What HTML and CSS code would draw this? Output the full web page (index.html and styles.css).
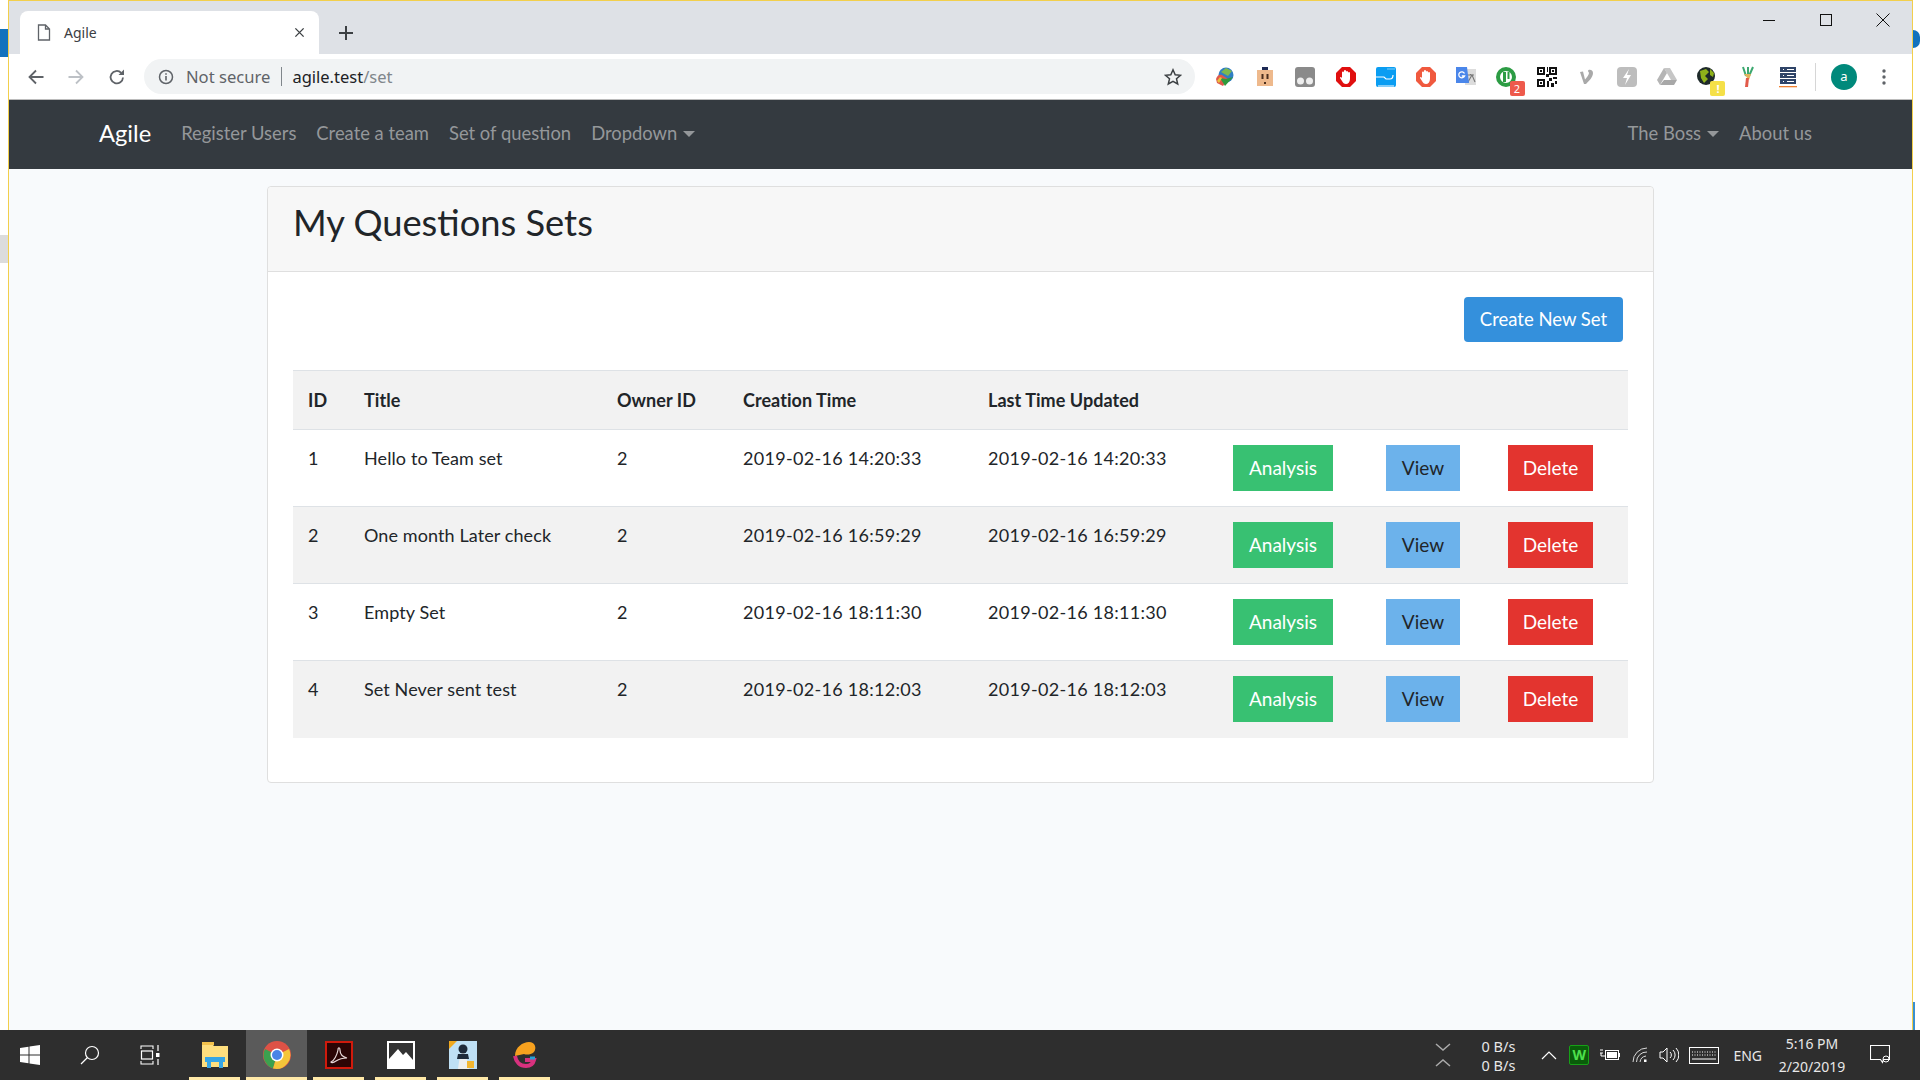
FILE: index.html
```html
<!DOCTYPE html>
<html lang="en">
<head>
<meta charset="utf-8">
<title>Agile</title>
<link rel="stylesheet" href="styles.css">
</head>
<body>
<div class="desktop">
  <div class="edge-left">
    <div class="edge-a"></div><div class="edge-blue"></div><div class="edge-b"></div><div class="edge-gray"></div><div class="edge-c"></div>
  </div>
  <div class="window">
    <div class="tabstrip">
      <div class="tab">
        <svg class="tab-file" viewBox="0 0 14 17"><path d="M1.5 1h7l4 4v11h-11zM8.500 1v4h4" fill="none" stroke="#5f6368" stroke-width="1.3"/></svg>
        <span class="tab-title">Agile</span>
        <svg class="tab-x" viewBox="0 0 12 12"><path d="M1.500 1.500l9 9M10.500 1.500l-9 9" stroke="#3c4043" stroke-width="1.500"/></svg>
      </div>
      <svg class="newtab" viewBox="0 0 16 16"><path d="M8 1v14M1 8h14" stroke="#3c4043" stroke-width="2"/></svg>
      <div class="winctl">
        <svg viewBox="0 0 14 14"><path d="M1 7.500h12" stroke="#111" stroke-width="1"/></svg>
        <svg viewBox="0 0 14 14"><rect x="1.500" y="1.500" width="11" height="11" fill="none" stroke="#111" stroke-width="1"/></svg>
        <svg viewBox="0 0 14 14"><path d="M.5.500l13 13M13.500.500l-13 13" stroke="#111" stroke-width="1"/></svg>
      </div>
    </div>
    <div class="toolbar">
      <div class="navbtns">
        <svg viewBox="0 0 18 18"><path d="M16.500 9H2.500M9 2.500L2.500 9 9 15.500" fill="none" stroke="#5f6368" stroke-width="1.800"/></svg>
        <svg viewBox="0 0 18 18"><path d="M1.500 9h14M9 2.500L15.500 9 9 15.500" fill="none" stroke="#bdc1c6" stroke-width="1.800"/></svg>
        <svg viewBox="0 0 18 18"><path d="M15 9.500A6.200 6.200 0 1 1 13.200 4.800" fill="none" stroke="#5f6368" stroke-width="1.800"/><path d="M16 1.500v5.500h-5.500z" fill="#5f6368"/></svg>
      </div>
      <div class="omnibox">
        <svg class="info" viewBox="0 0 16 16"><circle cx="8" cy="8" r="6.500" fill="none" stroke="#5f6368" stroke-width="1.500"/><path d="M8 7v4.500M8 4.200v1.600" stroke="#5f6368" stroke-width="1.600"/></svg>
        <span class="secure">Not secure</span>
        <span class="omni-sep"></span>
        <span class="url">agile.test<span class="url-path">/set</span></span>
        <svg class="star" viewBox="0 0 18 18"><path d="M9 1.800l2.200 4.900 5.300.6-4 3.500 1.200 5.200L9 13.300 4.300 16l1.200-5.200-4-3.500 5.300-.6z" fill="none" stroke="#3c4043" stroke-width="1.500"/></svg>
      </div>
      <div class="exts">
        <span class="ext"><svg viewBox="0 0 22 22"><circle cx="12" cy="9" r="7.500" fill="#2f7fc4"/><path d="M7 6l5-4 6 3-4 5z" fill="#7db84e"/><path d="M2 13c1-4 4-5 6-4l6 4-5 7-6-3z" fill="#e0574a"/><path d="M6 12l6 1 7-2-8 9z" fill="#2f9a3c"/><path d="M3 15l3-4 2 1-3 5z" fill="#e7c23c"/></svg></span>
        <span class="ext"><svg viewBox="0 0 22 22"><rect x="3" y="4" width="16" height="16" fill="#eeb98c"/><path d="M8 1h6v3H8z" fill="#1d2a55"/><path d="M7.500 8h2v5h-2zM12.500 8h2v5h-2zM10 16h2v2h-2z" fill="#4a2f1e"/></svg></span>
        <span class="ext"><svg viewBox="0 0 22 22"><rect x="1" y="1" width="20" height="20" rx="3" fill="#8a8a8a"/><circle cx="6.500" cy="15" r="3.500" fill="#eee"/><circle cx="15.500" cy="15" r="3.500" fill="#eee"/></svg></span>
        <span class="ext"><svg viewBox="0 0 22 22"><path d="M7 1h8l6 6v8l-6 6H7l-6-6V7z" fill="#e00f0f"/><path d="M7 11V6.500a1 1 0 0 1 2 0V5a1 1 0 0 1 2 0v1a1 1 0 0 1 2 0v1a1 1 0 0 1 2 0v6c0 3-2 5-4 5s-3-1-4-3l-2-3c0-1 1-1.500 2 0z" fill="#fff"/></svg></span>
        <span class="ext"><svg viewBox="0 0 22 22"><rect x="1" y="1" width="20" height="20" rx="2" fill="#0a9df2"/><path d="M1 11h8l2 2h4c2 0 3-1 3-4M3 20h16" fill="none" stroke="#fff" stroke-width="1.200"/><path d="M12 3h8" stroke="#7fd0fa"/></svg></span>
        <span class="ext"><svg viewBox="0 0 22 22"><path d="M7 1h8l6 6v8l-6 6H7l-6-6V7z" fill="#f0593e"/><path d="M7 11V6.500a1 1 0 0 1 2 0V5a1 1 0 0 1 2 0v1a1 1 0 0 1 2 0v1a1 1 0 0 1 2 0v6c0 3-2 5-4 5s-3-1-4-3l-2-3c0-1 1-1.500 2 0z" fill="#fff"/></svg></span>
        <span class="ext"><svg viewBox="0 0 22 22"><path d="M10 3h11v16H10z" fill="#dcdcdc"/><path d="M12 9h7M15.500 8v1M13 16l4-7 3 7" fill="none" stroke="#777" stroke-width="1.100"/><path d="M1 1h11l2 16H7l3 4-3-4H1z" fill="#4a86ea"/><path d="M9.500 7.500A3 3 0 1 0 9.600 10H6.800" fill="none" stroke="#fff" stroke-width="1.300"/></svg></span>
        <span class="ext"><svg viewBox="0 0 22 22"><circle cx="11" cy="11" r="8" fill="none" stroke="#2c9c44" stroke-width="4"/><path d="M8 6h3v10H8zM12.500 6h2v7h-2z" fill="#2c9c44"/></svg><span class="badge badge-red">2</span></span>
        <span class="ext"><svg viewBox="0 0 22 22"><rect x="1" y="1" width="20" height="20" fill="#fff"/><path d="M1 1h8v8H1zM3 3v4h4V3zM13 1h8v8h-8zM15 3v4h4V3zM1 13h8v8H1zM3 15v4h4v-4zM4 4h2v2H4zM16 4h2v2h-2zM4 16h2v2H4zM11 1h1v5h-1zM10 8h3v3h-3zM13 12h3v3h-3zM17 11h4v2h-4zM11 15h2v6h-2zM15 17h3v4h-3zM19 15h2v3h-2z" fill="#111"/></svg></span>
        <span class="ext"><svg viewBox="0 0 22 22"><path d="M4 6l3-.5 2 8c2-2 4-5 4-6.500 0-1-1-1-1-2 0-2 5-2 5 2 0 4-4 8-7 11H8z" fill="#a9a9a9"/></svg></span>
        <span class="ext"><svg viewBox="0 0 22 22"><rect x="1" y="1" width="20" height="20" rx="4" fill="#bdbdbd"/><path d="M13 3l-6 9h4l-2 7 6-10h-4z" fill="#fff"/></svg></span>
        <span class="ext"><svg viewBox="0 0 22 22"><path d="M8 2h6l7 12h-6z" fill="#c6c6c6"/><path d="M8 2l-7 12 3 5 7-12z" fill="#b5b5b5"/><path d="M8 14h13l-3 5H4z" fill="#a8a8a8"/></svg></span>
        <span class="ext"><svg viewBox="0 0 22 22"><circle cx="10" cy="10" r="9" fill="#1e2a2a"/><path d="M4 5l6-2 3 3-4 4 3 3-4 4-3-5zM14 3l4 4-1 4-3-2z" fill="#8fb21a"/></svg><span class="badge badge-yellow">!</span></span>
        <span class="ext"><svg viewBox="0 0 22 22"><path d="M6 1l3 9M16 1l-4 9M11 1v8" fill="none" stroke="#3ca870" stroke-width="2"/><path d="M7 8l7 0-2 6z" fill="#e2b35c"/><path d="M9 12h3l-1 9H8z" fill="#e25a4a"/></svg></span>
        <span class="ext"><svg viewBox="0 0 22 22"><path d="M3 1h16v5H3zM3 7h16v5H3zM3 13h16v5H3z" fill="#2f4468"/><path d="M6 3h1v1H6zM10 3h7v1h-7zM6 9h1v1H6zM10 9h7v1h-7zM6 15h1v1H6zM10 15h7v1h-7z" fill="#fff"/><path d="M2 20h18v1.300H2z" fill="#f08030"/></svg></span>
      </div>
      <span class="tool-sep"></span>
      <span class="avatar">a</span>
      <svg class="kebab" viewBox="0 0 4 16"><circle cx="2" cy="2" r="1.700" fill="#5f6368"/><circle cx="2" cy="8" r="1.700" fill="#5f6368"/><circle cx="2" cy="14" r="1.700" fill="#5f6368"/></svg>
    </div>
    <nav class="navbar">
      <div class="nav-left">
        <a class="brand">Agile</a>
        <a class="nav-link">Register Users</a>
        <a class="nav-link">Create a team</a>
        <a class="nav-link">Set of question</a>
        <a class="nav-link caret">Dropdown</a>
      </div>
      <div class="nav-right">
        <a class="nav-link caret">The Boss</a>
        <a class="nav-link">About us</a>
      </div>
    </nav>
    <main class="page">
      <section class="card">
        <header class="card-header"><h1 class="card-title">My Questions Sets</h1></header>
        <div class="card-body">
          <div class="actions"><a class="create-btn">Create New Set</a></div>
          <table class="sets">
            <thead>
              <tr>
                <th class="c-id">ID</th><th class="c-title">Title</th><th class="c-owner">Owner ID</th><th class="c-time">Creation Time</th><th class="c-time">Last Time Updated</th><th class="c-a"></th><th class="c-v"></th><th class="c-d"></th>
              </tr>
            </thead>
            <tbody>
              <tr><td>1</td><td>Hello to Team set</td><td>2</td><td class="date">2019-02-16 14:20:33</td><td class="date">2019-02-16 14:20:33</td><td><a class="btn green">Analysis</a></td><td><a class="btn blue">View</a></td><td><a class="btn red">Delete</a></td></tr>
              <tr><td>2</td><td>One month Later check</td><td>2</td><td class="date">2019-02-16 16:59:29</td><td class="date">2019-02-16 16:59:29</td><td><a class="btn green">Analysis</a></td><td><a class="btn blue">View</a></td><td><a class="btn red">Delete</a></td></tr>
              <tr><td>3</td><td>Empty Set</td><td>2</td><td class="date">2019-02-16 18:11:30</td><td class="date">2019-02-16 18:11:30</td><td><a class="btn green">Analysis</a></td><td><a class="btn blue">View</a></td><td><a class="btn red">Delete</a></td></tr>
              <tr><td>4</td><td>Set Never sent test</td><td>2</td><td class="date">2019-02-16 18:12:03</td><td class="date">2019-02-16 18:12:03</td><td><a class="btn green">Analysis</a></td><td><a class="btn blue">View</a></td><td><a class="btn red">Delete</a></td></tr>
            </tbody>
          </table>
        </div>
      </section>
    </main>
  </div>
  <div class="edge-right">
    <div class="edge-dot"></div>
    <div class="edge-sliver"></div>
  </div>
</div>
<footer class="taskbar">
  <div class="task-left">
    <span class="sys"><svg class="i-win" viewBox="0 0 20 20"><path d="M0 3l8.500-1.200v7.700H0zM9.500 1.600L20 0v9.500H9.500zM0 10.500h8.500v7.700L0 17zM9.500 10.500H20V20L9.500 18.400z" fill="#fff"/></svg></span>
    <span class="sys"><svg class="i-sys" viewBox="0 0 20 20"><circle cx="12" cy="8" r="6.500" fill="none" stroke="#fff" stroke-width="1.200"/><path d="M7.500 12.500L1 19" stroke="#fff" stroke-width="1.300"/></svg></span>
    <span class="sys"><svg class="i-sys" viewBox="0 0 20 20"><path d="M1 4V1h12v3M1 16v3h12v-3" fill="none" stroke="#fff" stroke-width="1.100"/><rect x="1.500" y="6" width="11" height="8" fill="none" stroke="#fff" stroke-width="1.200"/><path d="M18 0v6M18 14v6" stroke="#fff" stroke-width="1.200"/><rect x="16" y="8" width="3.500" height="4" fill="#fff"/></svg></span>
    <span class="app app-files"><svg class="i-app" viewBox="0 0 28 28"><path d="M1 3h10l2 2h14v21H1z" fill="#ffdf7e"/><rect x="1" y="1" width="12" height="3" fill="#f3c24c"/><path d="M6 27v-6h-2v-5h20v5h-2v6h-4v-6h-8v6z" fill="#37a6e6"/></svg></span>
    <span class="app active"><svg class="i-app" viewBox="0 0 28 28"><circle cx="14" cy="14" r="14" fill="#de5246"/><path d="M14 14L2 8A14 14 0 0 0 10 27.500z" fill="#3ca14f"/><path d="M14 14l12-6a14 14 0 0 1-16 19.500z" fill="#f5c53a"/><circle cx="14" cy="14" r="6.500" fill="#fff"/><circle cx="14" cy="14" r="5" fill="#4a84e6"/></svg></span>
    <span class="app app-after"><svg class="i-app" viewBox="0 0 28 28"><rect x="1" y="1" width="26" height="26" fill="#2b0505" stroke="#d01a0c" stroke-width="2"/><path d="M6 21c3-1 6-7 7-12 0-3 2-3 2 0 0 4 3 7 7 8-3 0-8 1-11 3-3 2-5 2-5 1z" fill="none" stroke="#e8d9d9" stroke-width="1.200"/></svg></span>
    <span class="app"><svg class="i-app" viewBox="0 0 28 28"><rect x="1" y="1" width="26" height="26" fill="#333" stroke="#fff" stroke-width="2"/><path d="M2 18l9-10 5 6 3-3 7 8v8H2z" fill="#fff"/></svg></span>
    <span class="app"><svg class="i-app" viewBox="0 0 28 28"><rect width="28" height="28" fill="#bfe0f5"/><path d="M0 0h8L0 8z" fill="#f0a81e"/><path d="M9 28l2-14 3-3 3 3 3 14z" fill="#efefef"/><circle cx="14" cy="8" r="4.500" fill="#1f2a3a"/><path d="M9 13h10l1 5H8z" fill="#1f2a3a"/><rect x="18" y="20" width="7" height="7" fill="#f2b632"/></svg></span>
    <span class="app"><svg class="i-app" viewBox="0 0 28 28"><path d="M4 15C4 6 12 1 18 1c6 0 8 6 5 10-3 3-8 3-10 2l-9 2z" fill="#f7a11e"/><path d="M4 15c1 6 5 10 11 10 4 0 7-2 8-6h-9" fill="none" stroke="#d8317e" stroke-width="4"/><path d="M19 17h5" stroke="#27a0d8" stroke-width="3"/></svg></span>
  </div>
  <div class="tray">
    <span class="chevs"><svg viewBox="0 0 16 26"><path d="M1 2l7 6 7-6" fill="none" stroke="#aaa" stroke-width="1.500"/><path d="M1 24l7-6 7 6" fill="none" stroke="#aaa" stroke-width="1.500"/></svg></span>
    <span class="speeds"><span>0 B/s</span><span>0 B/s</span></span>
    <svg class="t-up" viewBox="0 0 16 9"><path d="M1 8l7-7 7 7" fill="none" stroke="#fff" stroke-width="1.200"/></svg>
    <span class="t-w">W</span>
    <svg class="t-batt" viewBox="0 0 20 12"><path d="M0 1h3M0 4h3M1 4v3h4" fill="none" stroke="#fff" stroke-width="1"/><rect x="5.500" y="1.500" width="13" height="9" fill="#2e2e2e" stroke="#fff"/><rect x="7" y="3" width="10" height="6" fill="#fff"/><rect x="19" y="4" width="1" height="4" fill="#fff"/></svg>
    <svg class="t-wifi" viewBox="0 0 16 16"><path d="M1 15A14 14 0 0 1 15 1M4.500 15A10 10 0 0 1 15 5M8 15a7 7 0 0 1 6-6" fill="none" stroke="#d8d8d8" stroke-width="1"/><rect x="12" y="12.500" width="2.500" height="2.500" fill="#fff"/></svg>
    <svg class="t-vol" viewBox="0 0 20 16"><path d="M1 5h3l4-4v14l-4-4H1z" fill="none" stroke="#fff"/><path d="M11 5a4 4 0 0 1 0 6M14 3a7 7 0 0 1 0 10M17 1a10 10 0 0 1 0 14" fill="none" stroke="#fff"/></svg>
    <svg class="t-kb" viewBox="0 0 30 17"><rect x=".5" y=".5" width="29" height="16" fill="none" stroke="#fff"/><path d="M3 5h24M3 8h24" stroke="#fff" stroke-dasharray="1 1.500"/><path d="M3 12h24" stroke="#fff"/></svg>
    <span class="t-lang">ENG</span>
    <span class="clock"><span>5:16 PM</span><span>2/20/2019</span></span>
    <svg class="t-note" viewBox="0 0 20 20"><path d="M.5.500h19v14h-6l-1 3-2-3H.5z" fill="none" stroke="#fff" stroke-width="1.100"/><circle cx="16" cy="14" r="3" fill="none" stroke="#fff"/></svg>
  </div>
</footer>
</body>
</html>
```

FILE: styles.css
```css
* { box-sizing: border-box; }
html, body { margin: 0; height: 100%; overflow: hidden; }
body { width: 1920px; height: 1080px; display: flex; flex-direction: column; font-family: Lato, "Noto Sans", sans-serif; color: #212529; background: #fff; }
a { text-decoration: none; }
svg { display: block; flex: none; }

.desktop { height: 1030px; display: flex; }
.edge-left { width: 8px; display: flex; flex-direction: column; background: #fff; }
.edge-a { height: 29px; background: #fff; }
.edge-blue { height: 28px; background: #1272bd; }
.edge-b { height: 178px; background: #fff; }
.edge-gray { height: 28px; background: #dcdcdc; }
.edge-c { flex: 1; background: #fff; }
.edge-right { width: 8px; background: #fff; border-left: 1px solid #f2cf4c; padding-top: 30px; display: flex; flex-direction: column; }
.edge-dot { width: 7px; height: 18px; border-radius: 0 9px 9px 0; background: #1272bd; }
.edge-sliver { width: 2px; height: 28px; margin-top: auto; background: #3a8fd0; }

.window { width: 1904px; display: flex; flex-direction: column; border-top: 1px solid #f2cf4c; border-left: 1px solid #f2cf4c; }

.tabstrip { height: 53px; background: #dee1e6; display: flex; align-items: flex-end; padding-left: 11px; }
.tab { width: 299px; height: 43px; background: #fff; border-radius: 8px 8px 0 0; display: flex; align-items: center; padding: 0 14px 0 17px; }
.tab-file { width: 14px; height: 17px; }
.tab-title { font-family: "Noto Sans", sans-serif; font-size: 14px; color: #3c4043; margin-left: 13px; flex: 1; }
.tab-x { width: 11px; height: 11px; }
.newtab { width: 16px; height: 16px; margin: 0 0 13px 19px; }
.winctl { margin-left: auto; align-self: flex-start; display: flex; gap: 43px; padding: 12px 22px 0 0; }
.winctl svg { width: 14px; height: 14px; }

.toolbar { height: 46px; background: #fff; border-bottom: 1px solid #bcbcbc; display: flex; align-items: center; }
.navbtns { width: 135px; padding-left: 18px; display: flex; gap: 22px; }
.navbtns svg { width: 18px; height: 18px; }
.navbtns svg:last-child { margin-left: 1px; }
.omnibox { width: 1051px; height: 35px; border-radius: 18px; background: #f1f3f4; display: flex; align-items: center; padding: 0 13px 0 14px; }
.info { width: 16px; height: 16px; }
.secure { font-family: "Noto Sans", sans-serif; font-size: 16.600px; color: #5f6368; margin-left: 12px; }
.omni-sep { width: 1px; height: 19px; background: #80868b; margin: 0 10px 0 11px; }
.url { font-family: "Noto Sans", sans-serif; font-size: 16.500px; color: #202124; }
.url-path { color: #80868b; }
.star { width: 18px; height: 18px; margin-left: auto; }

.exts { display: flex; margin-left: 10px; }
.ext { width: 40.200px; height: 24px; display: flex; align-items: center; justify-content: center; position: relative; }
.ext svg { width: 22px; height: 22px; }
.badge { position: absolute; right: 2px; bottom: -7px; width: 15px; height: 15px; border-radius: 2px; font-family: "Noto Sans", sans-serif; font-size: 11px; line-height: 15px; text-align: center; }
.badge-red { background: #ee5a4c; color: #fff; }
.badge-yellow { background: #f5e048; color: #fff; font-weight: 700; }
.tool-sep { width: 1px; height: 28px; background: #d6d6d6; margin-left: 7px; }
.avatar { width: 26px; height: 26px; margin-left: 15px; border-radius: 50%; background: #00897b; color: #fff; font-family: "Noto Sans", sans-serif; font-size: 13px; line-height: 25px; text-align: center; }
.kebab { width: 4px; height: 16px; margin-left: 25px; }

.navbar { height: 69px; background: #343a40; display: flex; justify-content: space-between; align-items: center; padding: 0 90px 3px 90px; }
.nav-left, .nav-right { display: flex; align-items: center; }
.brand { font-size: 23.700px; color: #fff; margin-right: 20px; }
.nav-link { font-size: 18.400px; color: #94979a; padding: 0 10px; }
.caret::after { content: ""; display: inline-block; margin-left: 6px; vertical-align: 3px; border-top: 6px solid #94979a; border-left: 6px solid transparent; border-right: 6px solid transparent; }

.page { flex: 1; background: #f8fafc; padding: 17px 0 0 258px; }
.card { width: 1387px; height: 597px; background: #fff; border: 1px solid #dfdfdf; border-radius: 4px; }
.card-header { height: 85px; background: #f7f7f7; border-bottom: 1px solid #dfdfdf; padding: 0 25px; display: flex; align-items: center; border-radius: 4px 4px 0 0; }
.card-title { margin: 0 0 15px; font-size: 36.300px; font-weight: 400; color: #212529; }
.card-body { padding: 25px 25px 0; }
.actions { display: flex; justify-content: flex-end; padding-right: 5px; margin-bottom: 28px; }
.create-btn { width: 159px; height: 45px; border-radius: 4px; background: #3490dc; color: #fff; font-size: 18.500px; padding-bottom: 2px; display: flex; align-items: center; justify-content: center; }

.sets { width: 1335px; table-layout: fixed; border-collapse: collapse; font-size: 18px; line-height: 27px; }
.sets th { height: 59px; text-align: left; font-weight: 700; letter-spacing: .05px; background: #f2f2f2; padding: 0 15px; border-top: 1px solid #dee2e6; border-bottom: 1px solid #dee2e6; }
.c-id { width: 56px; }
.c-title { width: 253px; }
.c-owner { width: 126px; }
.c-time { width: 245px; }
.c-a { width: 153px; }
.c-v { width: 122px; }
.c-d { width: 135px; }
.sets td { height: 77px; padding: 15px 15px 0; vertical-align: top; border-top: 1px solid #dee2e6; letter-spacing: .1px; }
.sets td.date { letter-spacing: .3px; }
.sets tbody tr:nth-child(even) td { background: #f2f2f2; }
.sets td .btn { letter-spacing: 0; }
.btn { display: flex; height: 46px; align-items: center; justify-content: center; font-size: 19px; padding-bottom: 1px; }
.green { width: 100px; background: #38c172; color: #fff; }
.blue { width: 74px; background: #6cb2eb; color: #212529; }
.red { width: 85px; background: #e3342f; color: #fff; }

.taskbar { height: 50px; background: #2e2e2e; display: flex; justify-content: space-between; }
.task-left { display: flex; }
.sys { width: 60px; display: flex; align-items: center; justify-content: center; }
.i-win { width: 20px; height: 20px; }
.i-sys { width: 20px; height: 20px; }
.app { width: 51px; margin-left: 11px; display: flex; align-items: center; justify-content: center; border-bottom: 3px solid #ffe9a8; padding-top: 3px; }
.app-files { margin-left: 9px; }
.active { width: 61px; margin-left: 6px; background: #5a5a5a; }
.app-after { margin-left: 6px; }
.i-app { width: 28px; height: 28px; }
.tray { display: flex; align-items: center; color: #e8e8e8; font-family: "Noto Sans", sans-serif; font-size: 14px; padding-right: 30px; }
.chevs svg { width: 16px; height: 26px; }
.speeds { display: flex; flex-direction: column; align-items: flex-start; margin-left: 31px; padding-top: 2px; line-height: 19px; font-size: 14.500px; }
.t-up { width: 16px; height: 9px; margin-left: 26px; }
.t-w { width: 20px; height: 20px; margin-left: 12px; background: #0a5c0a; border: 1px solid #17a017; border-radius: 2px; color: #4de04d; font-size: 14px; font-weight: 700; line-height: 18px; text-align: center; }
.t-batt { width: 20px; height: 12px; margin-left: 11px; }
.t-wifi { width: 16px; height: 16px; margin-left: 12px; }
.t-vol { width: 20px; height: 16px; margin-left: 11px; }
.t-kb { width: 30px; height: 17px; margin-left: 10px; }
.t-lang { margin-left: 14px; }
.clock { display: flex; flex-direction: column; align-items: center; width: 70px; margin-left: 15px; line-height: 23px; }
.t-note { width: 20px; height: 20px; margin-left: 23px; }
```
